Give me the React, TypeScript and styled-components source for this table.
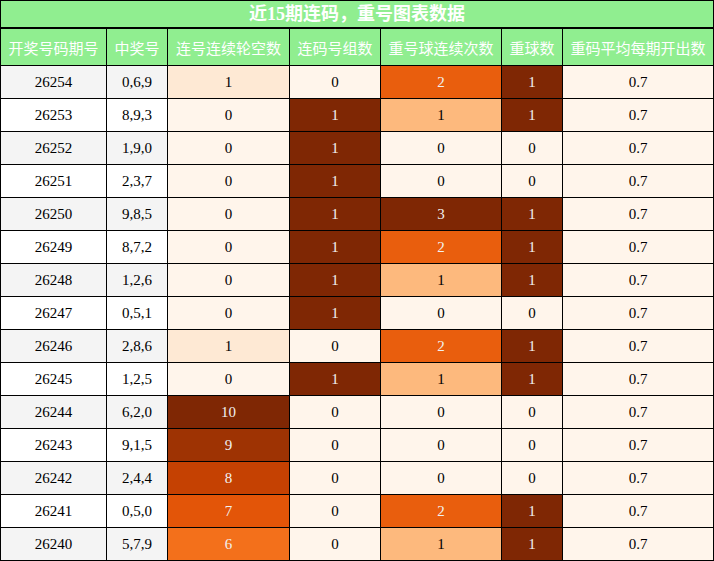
import React from "react";
import styled, { createGlobalStyle } from "styled-components";

const GlobalStyle = createGlobalStyle`
  html, body { margin: 0; padding: 0; background: #ffffff; }
  body { font-family: "Liberation Serif", "Noto Sans CJK SC", serif; }
`;

const Wrapper = styled.div`
  width: 714px;
`;

const Title = styled.div`
  box-sizing: border-box;
  height: 29px;
  border: 1px solid #000;
  border-bottom-width: 2px;
  background: #90ee90;
  color: #ffffff;
  font-family: "Liberation Serif", "Noto Sans CJK SC", serif;
  font-weight: bold;
  font-size: 18px;
  line-height: 26px;
  text-align: center;
`;

const Grid = styled.div`
  display: grid;
  grid-template-columns: 106px 61px 122px 91px 121px 61px 151px;
  border-left: 1px solid #000;
`;

const Cell = styled.div`
  box-sizing: border-box;
  border-right: 1px solid #000;
  border-bottom: 1px solid #000;
  display: flex;
  align-items: center;
  justify-content: center;
  white-space: nowrap;
`;

const HeadCell = styled(Cell)`
  height: 37px;
  background: #90ee90;
  color: #ffffff;
  font-family: "Noto Sans CJK SC", sans-serif;
  font-size: 15px;
`;

const DataCell = styled(Cell)<{ $bg: string; $fg: string }>`
  height: 33px;
  background: ${(p) => p.$bg};
  color: ${(p) => p.$fg};
  font-family: "Liberation Serif", serif;
  font-size: 15px;
`;

const headers = [
  "开奖号码期号",
  "中奖号",
  "连号连续轮空数",
  "连码号组数",
  "重号球连续次数",
  "重球数",
  "重码平均每期开出数",
];

type Row = [string, string, number, number, number, number, number];

const rows: Row[] = [
  ["26254", "0,6,9", 1, 0, 2, 1, 0.7],
  ["26253", "8,9,3", 0, 1, 1, 1, 0.7],
  ["26252", "1,9,0", 0, 1, 0, 0, 0.7],
  ["26251", "2,3,7", 0, 1, 0, 0, 0.7],
  ["26250", "9,8,5", 0, 1, 3, 1, 0.7],
  ["26249", "8,7,2", 0, 1, 2, 1, 0.7],
  ["26248", "1,2,6", 0, 1, 1, 1, 0.7],
  ["26247", "0,5,1", 0, 1, 0, 0, 0.7],
  ["26246", "2,8,6", 1, 0, 2, 1, 0.7],
  ["26245", "1,2,5", 0, 1, 1, 1, 0.7],
  ["26244", "6,2,0", 10, 0, 0, 0, 0.7],
  ["26243", "9,1,5", 9, 0, 0, 0, 0.7],
  ["26242", "2,4,4", 8, 0, 0, 0, 0.7],
  ["26241", "0,5,0", 7, 0, 2, 1, 0.7],
  ["26240", "5,7,9", 6, 0, 1, 1, 0.7],
];

const oranges = [
  "#fff5eb",
  "#fee6ce",
  "#fdd0a2",
  "#fdae6b",
  "#fd8d3c",
  "#f16913",
  "#d94801",
  "#a63603",
  "#7f2704",
];

const hexToRgb = (h: string) => [
  parseInt(h.slice(1, 3), 16),
  parseInt(h.slice(3, 5), 16),
  parseInt(h.slice(5, 7), 16),
];

function colormap(t: number): number[] {
  const x = Math.max(0, Math.min(1, t)) * (oranges.length - 1);
  const i = Math.min(Math.floor(x), oranges.length - 2);
  const f = x - i;
  const a = hexToRgb(oranges[i]);
  const b = hexToRgb(oranges[i + 1]);
  return a.map((v, k) => Math.round(v + (b[k] - v) * f));
}

function luminance(rgb: number[]) {
  const c = rgb.map((v) => {
    const s = v / 255;
    return s <= 0.03928 ? s / 12.92 : Math.pow((s + 0.055) / 1.055, 2.4);
  });
  return 0.2126 * c[0] + 0.7152 * c[1] + 0.0722 * c[2];
}

function gradient(value: number, min: number, max: number) {
  const t = max === min ? 0 : (value - min) / (max - min);
  const rgb = colormap(t);
  const bg = `rgb(${rgb[0]}, ${rgb[1]}, ${rgb[2]})`;
  const fg = luminance(rgb) < 0.408 ? "#f1f1f1" : "#000000";
  return { bg, fg };
}

const ranges = [2, 3, 4, 5, 6].map((col) => {
  const vals = rows.map((r) => r[col] as number);
  return { col, min: Math.min(...vals), max: Math.max(...vals) };
});

export default function App() {
  return (
    <Wrapper>
      <GlobalStyle />
      <Title>近15期连码，重号图表数据</Title>
      <Grid>
        {headers.map((h) => (
          <HeadCell key={h}>{h}</HeadCell>
        ))}
        {rows.map((r, ri) => {
          const plain = ri % 2 === 0 ? "#f4f4f4" : "#ffffff";
          return (
            <React.Fragment key={r[0]}>
              <DataCell $bg={plain} $fg="#000">{r[0]}</DataCell>
              <DataCell $bg={plain} $fg="#000">{r[1]}</DataCell>
              {ranges.map(({ col, min, max }) => {
                const v = r[col] as number;
                const { bg, fg } = gradient(v, min, max);
                return (
                  <DataCell key={col} $bg={bg} $fg={fg}>
                    {String(v)}
                  </DataCell>
                );
              })}
            </React.Fragment>
          );
        })}
      </Grid>
    </Wrapper>
  );
}
